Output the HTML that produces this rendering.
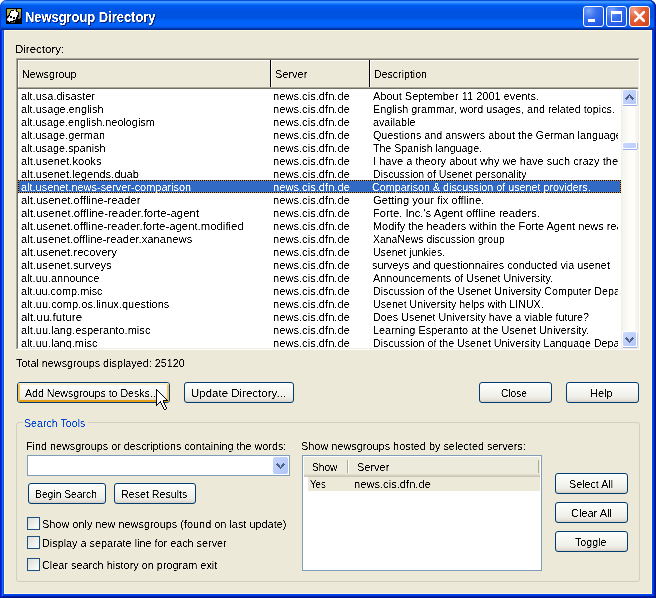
<!DOCTYPE html>
<html><head><meta charset="utf-8"><style>
html,body{margin:0;padding:0;}
body{width:656px;height:598px;overflow:hidden;position:relative;background:#fff;font-family:"Liberation Sans",sans-serif;font-size:11px;line-height:13px;}
.a{position:absolute;}
.t{filter:url(#sh);position:absolute;white-space:nowrap;font-size:11px;line-height:13px;transform-origin:0 0;color:#000;}
.btn{position:absolute;border:1px solid #003C74;border-radius:3px;background:linear-gradient(180deg,#FFFFFF 0%,#F8F8F5 30%,#F0F0EA 70%,#E6E3DA 88%,#D6D0C5 100%);}
.hot{position:absolute;left:0;top:0;right:0;bottom:0;border:2px solid;border-color:#FFF0CF #F8C05A #E5A01A #F8C05A;border-radius:2px;}
</style></head><body>
<svg width="0" height="0" style="position:absolute"><filter id="sh"><feComponentTransfer><feFuncA type="linear" slope="3" intercept="-1.0"/></feComponentTransfer></filter></svg>

<div class="a" style="left:0;top:0;width:656px;height:30px;border-radius:7px 7px 0 0;box-shadow:inset 1px 0 0 #0A3CD4,inset -1px 0 0 #001A9C,inset -2px 0 0 #0036C8;background:linear-gradient(180deg,#0A4ED8 0px,#0A4ED8 0.5px,#3D95FF 1.5px,#3D95FF 2.5px,#1E7BFF 3.5px,#0A6BF5 4.5px,#005CEE 5.5px,#0055E6 8.5px,#0053E0 12px,#0053E0 17.5px,#005AEA 19px,#0062F8 21px,#0062F8 25.5px,#005CF0 26.5px,#0050DC 27.5px,#003BB5 28.5px,#002C96 29.5px);"></div>
<div class="a" style="left:0px;top:30px;width:4px;height:568px;background:linear-gradient(90deg,#0019CF 0px,#0019CF 1px,#0832D9 1px,#0832D9 2px,#166AEE 2px,#166AEE 3px,#0855DD 3px,#0855DD 4px);"></div>
<div class="a" style="left:652px;top:30px;width:4px;height:564px;background:linear-gradient(90deg,#0045F0 0px,#0045F0 1px,#003DDC 1px,#003DDC 2px,#001DA0 2px,#001DA0 3px,#00138C 3px);"></div>
<div class="a" style="left:4px;top:594px;width:648px;height:4px;background:linear-gradient(180deg,#0045F0 0px,#0045F0 1px,#003DDC 1px,#003DDC 2px,#001DA0 2px,#001DA0 3px,#00138C 3px);"></div>
<svg class="a" style="left:0;top:594px" width="4" height="4" shape-rendering="crispEdges"><rect x="0" y="0" width="1" height="1" fill="#0019CF"/><rect x="1" y="0" width="1" height="1" fill="#0832D9"/><rect x="2" y="0" width="1" height="1" fill="#166AEE"/><rect x="3" y="0" width="1" height="1" fill="#0855DD"/><rect x="0" y="1" width="1" height="1" fill="#0019CF"/><rect x="1" y="1" width="1" height="1" fill="#0832D9"/><rect x="2" y="1" width="1" height="1" fill="#166AEE"/><rect x="3" y="1" width="1" height="1" fill="#003DDC"/><rect x="0" y="2" width="1" height="1" fill="#0019CF"/><rect x="1" y="2" width="1" height="1" fill="#0832D9"/><rect x="2" y="2" width="1" height="1" fill="#001DA0"/><rect x="3" y="2" width="1" height="1" fill="#001DA0"/><rect x="0" y="3" width="1" height="1" fill="#0019CF"/><rect x="1" y="3" width="1" height="1" fill="#00138C"/><rect x="2" y="3" width="1" height="1" fill="#00138C"/><rect x="3" y="3" width="1" height="1" fill="#00138C"/></svg>
<svg class="a" style="left:652px;top:594px" width="4" height="4" shape-rendering="crispEdges"><rect x="0" y="0" width="1" height="1" fill="#0045F0"/><rect x="1" y="0" width="1" height="1" fill="#003DDC"/><rect x="2" y="0" width="1" height="1" fill="#001DA0"/><rect x="3" y="0" width="1" height="1" fill="#00138C"/><rect x="0" y="1" width="1" height="1" fill="#003DDC"/><rect x="1" y="1" width="1" height="1" fill="#003DDC"/><rect x="2" y="1" width="1" height="1" fill="#001DA0"/><rect x="3" y="1" width="1" height="1" fill="#00138C"/><rect x="0" y="2" width="1" height="1" fill="#001DA0"/><rect x="1" y="2" width="1" height="1" fill="#001DA0"/><rect x="2" y="2" width="1" height="1" fill="#001DA0"/><rect x="3" y="2" width="1" height="1" fill="#00138C"/><rect x="0" y="3" width="1" height="1" fill="#00138C"/><rect x="1" y="3" width="1" height="1" fill="#00138C"/><rect x="2" y="3" width="1" height="1" fill="#00138C"/><rect x="3" y="3" width="1" height="1" fill="#00138C"/></svg>
<div class="a" style="left:4px;top:30px;width:648px;height:564px;box-sizing:border-box;border:1px solid #FFF7DC;background:#ECE9D8;"></div>
<svg class="a" style="left:6px;top:8px" width="16" height="16" shape-rendering="crispEdges"><rect x="0" y="0" width="1" height="1" fill="#000000"/><rect x="1" y="0" width="1" height="1" fill="#000000"/><rect x="2" y="0" width="1" height="1" fill="#000000"/><rect x="3" y="0" width="1" height="1" fill="#000000"/><rect x="4" y="0" width="1" height="1" fill="#000000"/><rect x="5" y="0" width="1" height="1" fill="#000000"/><rect x="6" y="0" width="1" height="1" fill="#000000"/><rect x="7" y="0" width="1" height="1" fill="#000000"/><rect x="8" y="0" width="1" height="1" fill="#000000"/><rect x="9" y="0" width="1" height="1" fill="#000000"/><rect x="10" y="0" width="1" height="1" fill="#000000"/><rect x="11" y="0" width="1" height="1" fill="#000000"/><rect x="12" y="0" width="1" height="1" fill="#000000"/><rect x="13" y="0" width="1" height="1" fill="#000000"/><rect x="14" y="0" width="1" height="1" fill="#000000"/><rect x="15" y="0" width="1" height="1" fill="#000000"/><rect x="0" y="1" width="1" height="1" fill="#000000"/><rect x="1" y="1" width="1" height="1" fill="#B5B03A"/><rect x="2" y="1" width="1" height="1" fill="#B5B03A"/><rect x="3" y="1" width="1" height="1" fill="#B5B03A"/><rect x="4" y="1" width="1" height="1" fill="#B5B03A"/><rect x="5" y="1" width="1" height="1" fill="#B5B03A"/><rect x="6" y="1" width="1" height="1" fill="#B5B03A"/><rect x="7" y="1" width="1" height="1" fill="#8E8EA6"/><rect x="8" y="1" width="1" height="1" fill="#8E8EA6"/><rect x="9" y="1" width="1" height="1" fill="#8E8EA6"/><rect x="10" y="1" width="1" height="1" fill="#000000"/><rect x="11" y="1" width="1" height="1" fill="#B5B03A"/><rect x="12" y="1" width="1" height="1" fill="#B5B03A"/><rect x="13" y="1" width="1" height="1" fill="#B5B03A"/><rect x="14" y="1" width="1" height="1" fill="#B5B03A"/><rect x="15" y="1" width="1" height="1" fill="#000000"/><rect x="0" y="2" width="1" height="1" fill="#000000"/><rect x="1" y="2" width="1" height="1" fill="#B5B03A"/><rect x="2" y="2" width="1" height="1" fill="#B5B03A"/><rect x="3" y="2" width="1" height="1" fill="#B5B03A"/><rect x="4" y="2" width="1" height="1" fill="#8E8EA6"/><rect x="5" y="2" width="1" height="1" fill="#000000"/><rect x="6" y="2" width="1" height="1" fill="#000000"/><rect x="7" y="2" width="1" height="1" fill="#000000"/><rect x="8" y="2" width="1" height="1" fill="#FFFFFF"/><rect x="9" y="2" width="1" height="1" fill="#B5B03A"/><rect x="10" y="2" width="1" height="1" fill="#000000"/><rect x="11" y="2" width="1" height="1" fill="#B5B03A"/><rect x="12" y="2" width="1" height="1" fill="#B5B03A"/><rect x="13" y="2" width="1" height="1" fill="#B5B03A"/><rect x="14" y="2" width="1" height="1" fill="#B5B03A"/><rect x="15" y="2" width="1" height="1" fill="#000000"/><rect x="0" y="3" width="1" height="1" fill="#000000"/><rect x="1" y="3" width="1" height="1" fill="#B5B03A"/><rect x="2" y="3" width="1" height="1" fill="#B5B03A"/><rect x="3" y="3" width="1" height="1" fill="#B5B03A"/><rect x="4" y="3" width="1" height="1" fill="#000000"/><rect x="5" y="3" width="1" height="1" fill="#FFFFFF"/><rect x="6" y="3" width="1" height="1" fill="#FFFFFF"/><rect x="7" y="3" width="1" height="1" fill="#FFFFFF"/><rect x="8" y="3" width="1" height="1" fill="#FFFFFF"/><rect x="9" y="3" width="1" height="1" fill="#FFFFFF"/><rect x="10" y="3" width="1" height="1" fill="#000000"/><rect x="11" y="3" width="1" height="1" fill="#000000"/><rect x="12" y="3" width="1" height="1" fill="#B5B03A"/><rect x="13" y="3" width="1" height="1" fill="#B5B03A"/><rect x="14" y="3" width="1" height="1" fill="#B5B03A"/><rect x="15" y="3" width="1" height="1" fill="#000000"/><rect x="0" y="4" width="1" height="1" fill="#000000"/><rect x="1" y="4" width="1" height="1" fill="#B5B03A"/><rect x="2" y="4" width="1" height="1" fill="#B5B03A"/><rect x="3" y="4" width="1" height="1" fill="#8E8EA6"/><rect x="4" y="4" width="1" height="1" fill="#000000"/><rect x="5" y="4" width="1" height="1" fill="#FFFFFF"/><rect x="6" y="4" width="1" height="1" fill="#FFFFFF"/><rect x="7" y="4" width="1" height="1" fill="#FFFFFF"/><rect x="8" y="4" width="1" height="1" fill="#FFFFFF"/><rect x="9" y="4" width="1" height="1" fill="#FFFFFF"/><rect x="10" y="4" width="1" height="1" fill="#FFFFFF"/><rect x="11" y="4" width="1" height="1" fill="#FFFFFF"/><rect x="12" y="4" width="1" height="1" fill="#000000"/><rect x="13" y="4" width="1" height="1" fill="#7A7A7A"/><rect x="14" y="4" width="1" height="1" fill="#7A7A7A"/><rect x="15" y="4" width="1" height="1" fill="#000000"/><rect x="0" y="5" width="1" height="1" fill="#000000"/><rect x="1" y="5" width="1" height="1" fill="#B5B03A"/><rect x="2" y="5" width="1" height="1" fill="#B5B03A"/><rect x="3" y="5" width="1" height="1" fill="#000000"/><rect x="4" y="5" width="1" height="1" fill="#FFFFFF"/><rect x="5" y="5" width="1" height="1" fill="#FFFFFF"/><rect x="6" y="5" width="1" height="1" fill="#FFFFFF"/><rect x="7" y="5" width="1" height="1" fill="#FFFFFF"/><rect x="8" y="5" width="1" height="1" fill="#FFFFFF"/><rect x="9" y="5" width="1" height="1" fill="#FFFFFF"/><rect x="10" y="5" width="1" height="1" fill="#FFFFFF"/><rect x="11" y="5" width="1" height="1" fill="#FFFFFF"/><rect x="12" y="5" width="1" height="1" fill="#000000"/><rect x="13" y="5" width="1" height="1" fill="#7A7A7A"/><rect x="14" y="5" width="1" height="1" fill="#7A7A7A"/><rect x="15" y="5" width="1" height="1" fill="#000000"/><rect x="0" y="6" width="1" height="1" fill="#000000"/><rect x="1" y="6" width="1" height="1" fill="#B5B03A"/><rect x="2" y="6" width="1" height="1" fill="#B5B03A"/><rect x="3" y="6" width="1" height="1" fill="#000000"/><rect x="4" y="6" width="1" height="1" fill="#FFFFFF"/><rect x="5" y="6" width="1" height="1" fill="#FFFFFF"/><rect x="6" y="6" width="1" height="1" fill="#FFFFFF"/><rect x="7" y="6" width="1" height="1" fill="#FFFFFF"/><rect x="8" y="6" width="1" height="1" fill="#FFFFFF"/><rect x="9" y="6" width="1" height="1" fill="#FFFFFF"/><rect x="10" y="6" width="1" height="1" fill="#FFFFFF"/><rect x="11" y="6" width="1" height="1" fill="#FFFFFF"/><rect x="12" y="6" width="1" height="1" fill="#000000"/><rect x="13" y="6" width="1" height="1" fill="#7A7A7A"/><rect x="14" y="6" width="1" height="1" fill="#7A7A7A"/><rect x="15" y="6" width="1" height="1" fill="#000000"/><rect x="0" y="7" width="1" height="1" fill="#000000"/><rect x="1" y="7" width="1" height="1" fill="#B5B03A"/><rect x="2" y="7" width="1" height="1" fill="#000000"/><rect x="3" y="7" width="1" height="1" fill="#000000"/><rect x="4" y="7" width="1" height="1" fill="#FFFFFF"/><rect x="5" y="7" width="1" height="1" fill="#FFFFFF"/><rect x="6" y="7" width="1" height="1" fill="#FFFFFF"/><rect x="7" y="7" width="1" height="1" fill="#FFFFFF"/><rect x="8" y="7" width="1" height="1" fill="#FFFFFF"/><rect x="9" y="7" width="1" height="1" fill="#FFFFFF"/><rect x="10" y="7" width="1" height="1" fill="#FFFFFF"/><rect x="11" y="7" width="1" height="1" fill="#000000"/><rect x="12" y="7" width="1" height="1" fill="#000000"/><rect x="13" y="7" width="1" height="1" fill="#7A7A7A"/><rect x="14" y="7" width="1" height="1" fill="#7A7A7A"/><rect x="15" y="7" width="1" height="1" fill="#000000"/><rect x="0" y="8" width="1" height="1" fill="#000000"/><rect x="1" y="8" width="1" height="1" fill="#000000"/><rect x="2" y="8" width="1" height="1" fill="#000000"/><rect x="3" y="8" width="1" height="1" fill="#FFFFFF"/><rect x="4" y="8" width="1" height="1" fill="#000000"/><rect x="5" y="8" width="1" height="1" fill="#000000"/><rect x="6" y="8" width="1" height="1" fill="#FFFFFF"/><rect x="7" y="8" width="1" height="1" fill="#FFFFFF"/><rect x="8" y="8" width="1" height="1" fill="#FFFFFF"/><rect x="9" y="8" width="1" height="1" fill="#FFFFFF"/><rect x="10" y="8" width="1" height="1" fill="#FFFFFF"/><rect x="11" y="8" width="1" height="1" fill="#000000"/><rect x="12" y="8" width="1" height="1" fill="#000000"/><rect x="13" y="8" width="1" height="1" fill="#7A7A7A"/><rect x="14" y="8" width="1" height="1" fill="#7A7A7A"/><rect x="15" y="8" width="1" height="1" fill="#000000"/><rect x="0" y="9" width="1" height="1" fill="#000000"/><rect x="1" y="9" width="1" height="1" fill="#000000"/><rect x="2" y="9" width="1" height="1" fill="#8E8EA6"/><rect x="3" y="9" width="1" height="1" fill="#FFFFFF"/><rect x="4" y="9" width="1" height="1" fill="#000000"/><rect x="5" y="9" width="1" height="1" fill="#000000"/><rect x="6" y="9" width="1" height="1" fill="#FFFFFF"/><rect x="7" y="9" width="1" height="1" fill="#000000"/><rect x="8" y="9" width="1" height="1" fill="#000000"/><rect x="9" y="9" width="1" height="1" fill="#FFFFFF"/><rect x="10" y="9" width="1" height="1" fill="#000000"/><rect x="11" y="9" width="1" height="1" fill="#000000"/><rect x="12" y="9" width="1" height="1" fill="#7A7A7A"/><rect x="13" y="9" width="1" height="1" fill="#7A7A7A"/><rect x="14" y="9" width="1" height="1" fill="#7A7A7A"/><rect x="15" y="9" width="1" height="1" fill="#000000"/><rect x="0" y="10" width="1" height="1" fill="#000000"/><rect x="1" y="10" width="1" height="1" fill="#8E8EA6"/><rect x="2" y="10" width="1" height="1" fill="#FFFFFF"/><rect x="3" y="10" width="1" height="1" fill="#FFFFFF"/><rect x="4" y="10" width="1" height="1" fill="#FFFFFF"/><rect x="5" y="10" width="1" height="1" fill="#FFFFFF"/><rect x="6" y="10" width="1" height="1" fill="#FFFFFF"/><rect x="7" y="10" width="1" height="1" fill="#000000"/><rect x="8" y="10" width="1" height="1" fill="#000000"/><rect x="9" y="10" width="1" height="1" fill="#FFFFFF"/><rect x="10" y="10" width="1" height="1" fill="#000000"/><rect x="11" y="10" width="1" height="1" fill="#000000"/><rect x="12" y="10" width="1" height="1" fill="#7A7A7A"/><rect x="13" y="10" width="1" height="1" fill="#7A7A7A"/><rect x="14" y="10" width="1" height="1" fill="#000000"/><rect x="15" y="10" width="1" height="1" fill="#000000"/><rect x="0" y="11" width="1" height="1" fill="#000000"/><rect x="1" y="11" width="1" height="1" fill="#FFFFFF"/><rect x="2" y="11" width="1" height="1" fill="#FFFFFF"/><rect x="3" y="11" width="1" height="1" fill="#FFFFFF"/><rect x="4" y="11" width="1" height="1" fill="#FFFFFF"/><rect x="5" y="11" width="1" height="1" fill="#FFFFFF"/><rect x="6" y="11" width="1" height="1" fill="#FFFFFF"/><rect x="7" y="11" width="1" height="1" fill="#FFFFFF"/><rect x="8" y="11" width="1" height="1" fill="#FFFFFF"/><rect x="9" y="11" width="1" height="1" fill="#7A7A7A"/><rect x="10" y="11" width="1" height="1" fill="#000000"/><rect x="11" y="11" width="1" height="1" fill="#000000"/><rect x="12" y="11" width="1" height="1" fill="#000000"/><rect x="13" y="11" width="1" height="1" fill="#000000"/><rect x="14" y="11" width="1" height="1" fill="#000000"/><rect x="15" y="11" width="1" height="1" fill="#000000"/><rect x="0" y="12" width="1" height="1" fill="#000000"/><rect x="1" y="12" width="1" height="1" fill="#7A7A7A"/><rect x="2" y="12" width="1" height="1" fill="#FFFFFF"/><rect x="3" y="12" width="1" height="1" fill="#FFFFFF"/><rect x="4" y="12" width="1" height="1" fill="#FFFFFF"/><rect x="5" y="12" width="1" height="1" fill="#FFFFFF"/><rect x="6" y="12" width="1" height="1" fill="#FFFFFF"/><rect x="7" y="12" width="1" height="1" fill="#000000"/><rect x="8" y="12" width="1" height="1" fill="#000000"/><rect x="9" y="12" width="1" height="1" fill="#000000"/><rect x="10" y="12" width="1" height="1" fill="#000000"/><rect x="11" y="12" width="1" height="1" fill="#000000"/><rect x="12" y="12" width="1" height="1" fill="#000000"/><rect x="13" y="12" width="1" height="1" fill="#000000"/><rect x="14" y="12" width="1" height="1" fill="#000000"/><rect x="15" y="12" width="1" height="1" fill="#000000"/><rect x="0" y="13" width="1" height="1" fill="#000000"/><rect x="1" y="13" width="1" height="1" fill="#000000"/><rect x="2" y="13" width="1" height="1" fill="#000000"/><rect x="3" y="13" width="1" height="1" fill="#FFFFFF"/><rect x="4" y="13" width="1" height="1" fill="#000000"/><rect x="5" y="13" width="1" height="1" fill="#000000"/><rect x="6" y="13" width="1" height="1" fill="#000000"/><rect x="7" y="13" width="1" height="1" fill="#000000"/><rect x="8" y="13" width="1" height="1" fill="#7A7A7A"/><rect x="9" y="13" width="1" height="1" fill="#000000"/><rect x="10" y="13" width="1" height="1" fill="#000000"/><rect x="11" y="13" width="1" height="1" fill="#000000"/><rect x="12" y="13" width="1" height="1" fill="#000000"/><rect x="13" y="13" width="1" height="1" fill="#000000"/><rect x="14" y="13" width="1" height="1" fill="#000000"/><rect x="15" y="13" width="1" height="1" fill="#000000"/><rect x="0" y="14" width="1" height="1" fill="#000000"/><rect x="1" y="14" width="1" height="1" fill="#000000"/><rect x="2" y="14" width="1" height="1" fill="#000000"/><rect x="3" y="14" width="1" height="1" fill="#000000"/><rect x="4" y="14" width="1" height="1" fill="#000000"/><rect x="5" y="14" width="1" height="1" fill="#4A4A44"/><rect x="6" y="14" width="1" height="1" fill="#4A4A44"/><rect x="7" y="14" width="1" height="1" fill="#4A4A44"/><rect x="8" y="14" width="1" height="1" fill="#4A4A44"/><rect x="9" y="14" width="1" height="1" fill="#000000"/><rect x="10" y="14" width="1" height="1" fill="#000000"/><rect x="11" y="14" width="1" height="1" fill="#000000"/><rect x="12" y="14" width="1" height="1" fill="#000000"/><rect x="13" y="14" width="1" height="1" fill="#000000"/><rect x="14" y="14" width="1" height="1" fill="#000000"/><rect x="15" y="14" width="1" height="1" fill="#000000"/><rect x="0" y="15" width="1" height="1" fill="#000000"/><rect x="1" y="15" width="1" height="1" fill="#000000"/><rect x="2" y="15" width="1" height="1" fill="#000000"/><rect x="3" y="15" width="1" height="1" fill="#000000"/><rect x="4" y="15" width="1" height="1" fill="#000000"/><rect x="5" y="15" width="1" height="1" fill="#000000"/><rect x="6" y="15" width="1" height="1" fill="#000000"/><rect x="7" y="15" width="1" height="1" fill="#000000"/><rect x="8" y="15" width="1" height="1" fill="#000000"/><rect x="9" y="15" width="1" height="1" fill="#000000"/><rect x="10" y="15" width="1" height="1" fill="#000000"/><rect x="11" y="15" width="1" height="1" fill="#000000"/><rect x="12" y="15" width="1" height="1" fill="#000000"/><rect x="13" y="15" width="1" height="1" fill="#000000"/><rect x="14" y="15" width="1" height="1" fill="#000000"/><rect x="15" y="15" width="1" height="1" fill="#000000"/></svg>
<div class="t" style="left:26.08px;top:10px;transform:scaleX(0.9214);font-size:14px;font-weight:bold;line-height:16px;color:#0A1E7A;">Newsgroup Directory</div>
<div class="t" style="left:25.08px;top:9px;transform:scaleX(0.9214);font-size:14px;font-weight:bold;line-height:16px;color:#FFFFFF;">Newsgroup Directory</div>
<div class="a" style="left:583px;top:6px;width:19px;height:19px;border:1px solid #FFFFFF;border-radius:3px;background:radial-gradient(circle at 25% 20%,#7FA6F8 0%,#3A72F0 35%,#245EEA 70%,#1F4FD6 100%);"></div>
<div class="a" style="left:606px;top:6px;width:19px;height:19px;border:1px solid #FFFFFF;border-radius:3px;background:radial-gradient(circle at 25% 20%,#7FA6F8 0%,#3A72F0 35%,#245EEA 70%,#1F4FD6 100%);"></div>
<div class="a" style="left:629px;top:6px;width:19px;height:19px;border:1px solid #FFFFFF;border-radius:3px;background:radial-gradient(circle at 20% 15%,#F2A48C 0%,#E5663F 35%,#DC4E24 75%,#C8401A 100%);"></div>
<div class="a" style="left:588px;top:19px;width:7px;height:3px;background:#fff;"></div>
<div class="a" style="left:611px;top:11px;width:11px;height:11px;box-sizing:border-box;border:1px solid #fff;border-top-width:3px;"></div>
<svg class="a" style="left:634px;top:11px" width="11" height="11" viewBox="0 0 11 11">
<path d="M1 1 L10 10 M10 1 L1 10" stroke="#fff" stroke-width="2.6" stroke-linecap="square"/>
</svg>
<div class="t" style="left:14.95px;top:43px;transform:scaleX(1.0455);">Directory:</div>
<div class="a" style="left:16px;top:58px;width:624px;height:292px;box-sizing:border-box;border-style:solid;border-width:1px;border-color:#ACA899 #FFFFFF #FFFFFF #ACA899;background:#fff;"></div>
<div class="a" style="left:17px;top:59px;width:622px;height:290px;box-sizing:border-box;border-style:solid;border-width:1px;border-color:#716F64 #F1EFE2 #F1EFE2 #716F64;background:#fff;"></div>
<div class="a" style="left:18px;top:60px;width:620px;height:29px;overflow:hidden;">
<div class="a" style="left:0px;top:0;width:253px;height:29px;box-sizing:border-box;background:#ECE9D8;border-left:1px solid #FFFFFF;border-top:1px solid #FFFFFF;"></div>
<div class="a" style="left:252px;top:0;width:1px;height:27px;background:#000000;"></div>
<div class="a" style="left:253px;top:0;width:99px;height:29px;box-sizing:border-box;background:#ECE9D8;border-left:1px solid #FFFFFF;border-top:1px solid #FFFFFF;"></div>
<div class="a" style="left:351px;top:0;width:1px;height:27px;background:#000000;"></div>
<div class="a" style="left:352px;top:0;width:291px;height:29px;box-sizing:border-box;background:#ECE9D8;border-left:1px solid #FFFFFF;border-top:1px solid #FFFFFF;"></div>
<div class="a" style="left:642px;top:0;width:1px;height:27px;background:#000000;"></div>
<div class="a" style="left:0;top:27px;width:620px;height:1px;background:#ACA899;"></div>
<div class="a" style="left:0;top:28px;width:620px;height:1px;background:#716F64;"></div>
</div>
<div class="t" style="left:22.02px;top:68px;transform:scaleX(0.9811);">Newsgroup</div>
<div class="t" style="left:275.00px;top:68px;transform:scaleX(1.0000);">Server</div>
<div class="t" style="left:374.04px;top:68px;transform:scaleX(0.9623);">Description</div>
<div class="a" style="left:18px;top:89px;width:603px;height:259px;background:#fff;"></div>
<div class="a" style="left:18px;top:180px;width:603px;height:13px;background:#316AC5;"></div>
<div class="a" style="left:18px;top:180px;width:603px;height:1px;background:repeating-linear-gradient(90deg,#000 0 1px,#CE953A 1px 2px);"></div>
<div class="a" style="left:18px;top:192px;width:603px;height:1px;background:repeating-linear-gradient(90deg,#000 0 1px,#CE953A 1px 2px);"></div>
<div class="a" style="left:18px;top:180px;width:1px;height:13px;background:repeating-linear-gradient(180deg,#000 0 1px,#CE953A 1px 2px);"></div>
<div class="a" style="left:620px;top:180px;width:1px;height:13px;background:repeating-linear-gradient(180deg,#000 0 1px,#CE953A 1px 2px);"></div>
<div class="t" style="left:21.00px;top:90px;transform:scaleX(1.0000);">alt.usa.disaster</div>
<div class="t" style="left:272.99px;top:90px;transform:scaleX(1.0135);">news.cis.dfn.de</div>
<div class="t" style="left:21.00px;top:103px;transform:scaleX(1.0000);">alt.usage.english</div>
<div class="t" style="left:272.99px;top:103px;transform:scaleX(1.0135);">news.cis.dfn.de</div>
<div class="t" style="left:21.00px;top:116px;transform:scaleX(0.9851);">alt.usage.english.neologism</div>
<div class="t" style="left:272.99px;top:116px;transform:scaleX(1.0135);">news.cis.dfn.de</div>
<div class="t" style="left:21.00px;top:129px;transform:scaleX(0.9881);">alt.usage.german</div>
<div class="t" style="left:272.99px;top:129px;transform:scaleX(1.0135);">news.cis.dfn.de</div>
<div class="t" style="left:21.00px;top:142px;transform:scaleX(0.9881);">alt.usage.spanish</div>
<div class="t" style="left:272.99px;top:142px;transform:scaleX(1.0135);">news.cis.dfn.de</div>
<div class="t" style="left:21.00px;top:155px;transform:scaleX(1.0128);">alt.usenet.kooks</div>
<div class="t" style="left:272.99px;top:155px;transform:scaleX(1.0135);">news.cis.dfn.de</div>
<div class="t" style="left:21.00px;top:168px;transform:scaleX(1.0086);">alt.usenet.legends.duab</div>
<div class="t" style="left:272.99px;top:168px;transform:scaleX(1.0135);">news.cis.dfn.de</div>
<div class="t" style="left:21.00px;top:181px;transform:scaleX(0.9941);color:#FFFFFF;">alt.usenet.news-server-comparison</div>
<div class="t" style="left:272.99px;top:181px;transform:scaleX(1.0135);color:#FFFFFF;">news.cis.dfn.de</div>
<div class="t" style="left:21.00px;top:194px;transform:scaleX(1.0351);">alt.usenet.offline-reader</div>
<div class="t" style="left:272.99px;top:194px;transform:scaleX(1.0135);">news.cis.dfn.de</div>
<div class="t" style="left:21.00px;top:207px;transform:scaleX(1.0412);">alt.usenet.offline-reader.forte-agent</div>
<div class="t" style="left:272.99px;top:207px;transform:scaleX(1.0135);">news.cis.dfn.de</div>
<div class="t" style="left:21.00px;top:220px;transform:scaleX(1.0327);">alt.usenet.offline-reader.forte-agent.modified</div>
<div class="t" style="left:272.99px;top:220px;transform:scaleX(1.0135);">news.cis.dfn.de</div>
<div class="t" style="left:21.00px;top:233px;transform:scaleX(1.0241);">alt.usenet.offline-reader.xananews</div>
<div class="t" style="left:272.99px;top:233px;transform:scaleX(1.0135);">news.cis.dfn.de</div>
<div class="t" style="left:21.00px;top:246px;transform:scaleX(1.0326);">alt.usenet.recovery</div>
<div class="t" style="left:272.99px;top:246px;transform:scaleX(1.0135);">news.cis.dfn.de</div>
<div class="t" style="left:21.00px;top:259px;transform:scaleX(1.0227);">alt.usenet.surveys</div>
<div class="t" style="left:272.99px;top:259px;transform:scaleX(1.0135);">news.cis.dfn.de</div>
<div class="t" style="left:21.00px;top:272px;transform:scaleX(1.0000);">alt.uu.announce</div>
<div class="t" style="left:272.99px;top:272px;transform:scaleX(1.0135);">news.cis.dfn.de</div>
<div class="t" style="left:21.00px;top:285px;transform:scaleX(0.9877);">alt.uu.comp.misc</div>
<div class="t" style="left:272.99px;top:285px;transform:scaleX(1.0135);">news.cis.dfn.de</div>
<div class="t" style="left:21.00px;top:298px;transform:scaleX(1.0068);">alt.uu.comp.os.linux.questions</div>
<div class="t" style="left:272.99px;top:298px;transform:scaleX(1.0135);">news.cis.dfn.de</div>
<div class="t" style="left:21.00px;top:311px;transform:scaleX(1.0526);">alt.uu.future</div>
<div class="t" style="left:272.99px;top:311px;transform:scaleX(1.0135);">news.cis.dfn.de</div>
<div class="t" style="left:21.00px;top:324px;transform:scaleX(1.0079);">alt.uu.lang.esperanto.misc</div>
<div class="t" style="left:272.99px;top:324px;transform:scaleX(1.0135);">news.cis.dfn.de</div>
<div class="t" style="left:21.00px;top:337px;transform:scaleX(1.0000);">alt.uu.lang.misc</div>
<div class="t" style="left:272.99px;top:337px;transform:scaleX(1.0135);">news.cis.dfn.de</div>
<div class="a" style="left:370px;top:89px;width:248px;height:259px;overflow:hidden;">
<div class="t" style="left:3.00px;top:1px;transform:scaleX(1.0000);">About September 11 2001 events.</div>
<div class="t" style="left:3.02px;top:14px;transform:scaleX(0.9795);">English grammar, word usages, and related topics.</div>
<div class="t" style="left:3.00px;top:27px;transform:scaleX(0.9762);">available</div>
<div class="t" style="left:3.00px;top:40px;transform:scaleX(0.9756);">Questions and answers about the German language</div>
<div class="t" style="left:3.00px;top:53px;transform:scaleX(0.9640);">The Spanish language.</div>
<div class="t" style="left:3.00px;top:66px;transform:scaleX(1.0045);">I have a theory about why we have such crazy theories</div>
<div class="t" style="left:3.04px;top:79px;transform:scaleX(0.9620);">Discussion of Usenet personality</div>
<div class="t" style="left:2.02px;top:92px;transform:scaleX(0.9774);color:#FFFFFF;">Comparison &amp; discussion of usenet providers.</div>
<div class="t" style="left:3.00px;top:105px;transform:scaleX(1.0185);">Getting your fix offline.</div>
<div class="t" style="left:2.98px;top:118px;transform:scaleX(1.0186);">Forte, Inc.&#x27;s Agent offline readers.</div>
<div class="t" style="left:3.00px;top:131px;transform:scaleX(0.9957);">Modify the headers within the Forte Agent news reader</div>
<div class="t" style="left:3.05px;top:144px;transform:scaleX(0.9489);">XanaNews discussion group</div>
<div class="t" style="left:3.04px;top:157px;transform:scaleX(0.9589);">Usenet junkies.</div>
<div class="t" style="left:2.01px;top:170px;transform:scaleX(0.9874);">surveys and questionnaires conducted via usenet</div>
<div class="t" style="left:3.00px;top:183px;transform:scaleX(0.9835);">Announcements of Usenet University.</div>
<div class="t" style="left:3.03px;top:196px;transform:scaleX(0.9730);">Discussion of the Usenet University Computer Department</div>
<div class="t" style="left:3.03px;top:209px;transform:scaleX(0.9655);">Usenet University helps with LINUX.</div>
<div class="t" style="left:3.02px;top:222px;transform:scaleX(0.9817);">Does Usenet University have a viable future?</div>
<div class="t" style="left:3.01px;top:235px;transform:scaleX(0.9907);">Learning Esperanto at the Usenet University.</div>
<div class="t" style="left:3.03px;top:248px;transform:scaleX(0.9686);">Discussion of the Usenet University Language Department</div>
</div>
<div class="a" style="left:18px;top:348px;width:620px;height:1px;background:#F1EFE2;"></div>
<div class="a" style="left:16px;top:349px;width:624px;height:1px;background:#FFFFFF;"></div>
<div class="a" style="left:621px;top:89px;width:17px;height:259px;background:linear-gradient(90deg,#EEEDE5 0px,#F5F4EF 2px,#FDFDFA 8px,#FEFEFB 13px,#F4F3EE 16px);"></div>
<div class="a" style="left:622px;top:89px;width:15px;height:16px;box-sizing:border-box;border:1px solid #FFFFFF;border-radius:2px;background:linear-gradient(135deg,#CCDAFB 0%,#BFD0FA 50%,#B4C8F8 100%);"></div>
<div class="a" style="left:623px;top:105px;width:14px;height:1px;background:#9AB0E6;"></div>
<div class="a" style="left:637px;top:91px;width:1px;height:14px;background:#C8D2EE;"></div>
<svg class="a" style="left:625px;top:94px" width="9" height="6" shape-rendering="crispEdges"><rect x="4" y="0" width="1" height="1" fill="#4D6185"/><rect x="3" y="1" width="1" height="1" fill="#4D6185"/><rect x="4" y="1" width="1" height="1" fill="#4D6185"/><rect x="5" y="1" width="1" height="1" fill="#4D6185"/><rect x="2" y="2" width="1" height="1" fill="#4D6185"/><rect x="3" y="2" width="1" height="1" fill="#4D6185"/><rect x="5" y="2" width="1" height="1" fill="#4D6185"/><rect x="6" y="2" width="1" height="1" fill="#4D6185"/><rect x="1" y="3" width="1" height="1" fill="#4D6185"/><rect x="2" y="3" width="1" height="1" fill="#4D6185"/><rect x="3" y="3" width="1" height="1" fill="#4D6185"/><rect x="5" y="3" width="1" height="1" fill="#4D6185"/><rect x="6" y="3" width="1" height="1" fill="#4D6185"/><rect x="7" y="3" width="1" height="1" fill="#4D6185"/><rect x="0" y="4" width="1" height="1" fill="#4D6185"/><rect x="1" y="4" width="1" height="1" fill="#4D6185"/><rect x="2" y="4" width="1" height="1" fill="#4D6185"/><rect x="6" y="4" width="1" height="1" fill="#4D6185"/><rect x="7" y="4" width="1" height="1" fill="#4D6185"/><rect x="8" y="4" width="1" height="1" fill="#4D6185"/><rect x="1" y="5" width="1" height="1" fill="#4D6185"/><rect x="7" y="5" width="1" height="1" fill="#4D6185"/></svg>
<div class="a" style="left:622px;top:331px;width:15px;height:16px;box-sizing:border-box;border:1px solid #FFFFFF;border-radius:2px;background:linear-gradient(135deg,#CCDAFB 0%,#BFD0FA 50%,#B4C8F8 100%);"></div>
<div class="a" style="left:623px;top:347px;width:14px;height:1px;background:#9AB0E6;"></div>
<div class="a" style="left:637px;top:333px;width:1px;height:14px;background:#C8D2EE;"></div>
<svg class="a" style="left:625px;top:337px" width="9" height="6" shape-rendering="crispEdges"><rect x="1" y="0" width="1" height="1" fill="#4D6185"/><rect x="7" y="0" width="1" height="1" fill="#4D6185"/><rect x="0" y="1" width="1" height="1" fill="#4D6185"/><rect x="1" y="1" width="1" height="1" fill="#4D6185"/><rect x="2" y="1" width="1" height="1" fill="#4D6185"/><rect x="6" y="1" width="1" height="1" fill="#4D6185"/><rect x="7" y="1" width="1" height="1" fill="#4D6185"/><rect x="8" y="1" width="1" height="1" fill="#4D6185"/><rect x="1" y="2" width="1" height="1" fill="#4D6185"/><rect x="2" y="2" width="1" height="1" fill="#4D6185"/><rect x="3" y="2" width="1" height="1" fill="#4D6185"/><rect x="5" y="2" width="1" height="1" fill="#4D6185"/><rect x="6" y="2" width="1" height="1" fill="#4D6185"/><rect x="7" y="2" width="1" height="1" fill="#4D6185"/><rect x="2" y="3" width="1" height="1" fill="#4D6185"/><rect x="3" y="3" width="1" height="1" fill="#4D6185"/><rect x="5" y="3" width="1" height="1" fill="#4D6185"/><rect x="6" y="3" width="1" height="1" fill="#4D6185"/><rect x="3" y="4" width="1" height="1" fill="#4D6185"/><rect x="4" y="4" width="1" height="1" fill="#4D6185"/><rect x="5" y="4" width="1" height="1" fill="#4D6185"/><rect x="4" y="5" width="1" height="1" fill="#4D6185"/></svg>
<div class="a" style="left:622px;top:142px;width:15px;height:7px;box-sizing:border-box;border:1px solid #FFFFFF;border-radius:2px;background:linear-gradient(90deg,#C6D6FC,#BCD0FB);"></div>
<div class="a" style="left:623px;top:149px;width:14px;height:1px;background:#9AB0E6;"></div>
<div class="a" style="left:637px;top:143px;width:1px;height:6px;background:#A8BCEB;"></div>
<div class="t" style="left:16.00px;top:357px;transform:scaleX(0.9825);">Total newsgroups displayed: 25120</div>
<div class="btn" style="left:17px;top:382px;width:151px;height:19px;"><div class="hot"></div></div>
<div class="t" style="left:25.00px;top:387px;transform:scaleX(0.9635);">Add Newsgroups to Desks...</div>
<div class="btn" style="left:184px;top:382px;width:108px;height:19px;"></div>
<div class="t" style="left:190.95px;top:387px;transform:scaleX(1.0455);">Update Directory...</div>
<div class="btn" style="left:479px;top:382px;width:71px;height:19px;"></div>
<div class="t" style="left:501.08px;top:387px;transform:scaleX(0.9231);">Close</div>
<div class="btn" style="left:566px;top:382px;width:71px;height:19px;"></div>
<div class="t" style="left:590.00px;top:387px;transform:scaleX(1.0000);">Help</div>
<div class="a" style="left:16px;top:422px;width:624px;height:160px;box-sizing:border-box;border:1px solid #D0D0BF;border-radius:3px;"></div>
<div class="a" style="left:23px;top:418px;width:65px;height:8px;background:#ECE9D8;"></div>
<div class="t" style="left:24.03px;top:417px;transform:scaleX(0.9672);color:#0046D5;">Search Tools</div>
<div class="t" style="left:26.02px;top:440px;transform:scaleX(0.9810);">Find newsgroups or descriptions containing the words:</div>
<div class="a" style="left:27px;top:455px;width:263px;height:21px;box-sizing:border-box;border:1px solid #7F9DB9;background:#fff;"></div>
<div class="a" style="left:273px;top:457px;width:15px;height:17px;border-radius:2px;background:linear-gradient(135deg,#C6D5FC 0%,#B9CCFA 60%,#AFC6F8 100%);"></div>
<svg class="a" style="left:276px;top:463px" width="9" height="6" shape-rendering="crispEdges"><rect x="1" y="0" width="1" height="1" fill="#4D6185"/><rect x="7" y="0" width="1" height="1" fill="#4D6185"/><rect x="0" y="1" width="1" height="1" fill="#4D6185"/><rect x="1" y="1" width="1" height="1" fill="#4D6185"/><rect x="2" y="1" width="1" height="1" fill="#4D6185"/><rect x="6" y="1" width="1" height="1" fill="#4D6185"/><rect x="7" y="1" width="1" height="1" fill="#4D6185"/><rect x="8" y="1" width="1" height="1" fill="#4D6185"/><rect x="1" y="2" width="1" height="1" fill="#4D6185"/><rect x="2" y="2" width="1" height="1" fill="#4D6185"/><rect x="3" y="2" width="1" height="1" fill="#4D6185"/><rect x="5" y="2" width="1" height="1" fill="#4D6185"/><rect x="6" y="2" width="1" height="1" fill="#4D6185"/><rect x="7" y="2" width="1" height="1" fill="#4D6185"/><rect x="2" y="3" width="1" height="1" fill="#4D6185"/><rect x="3" y="3" width="1" height="1" fill="#4D6185"/><rect x="5" y="3" width="1" height="1" fill="#4D6185"/><rect x="6" y="3" width="1" height="1" fill="#4D6185"/><rect x="3" y="4" width="1" height="1" fill="#4D6185"/><rect x="4" y="4" width="1" height="1" fill="#4D6185"/><rect x="5" y="4" width="1" height="1" fill="#4D6185"/><rect x="4" y="5" width="1" height="1" fill="#4D6185"/></svg>
<div class="btn" style="left:28px;top:483px;width:76px;height:19px;"></div>
<div class="t" style="left:35.06px;top:488px;transform:scaleX(0.9375);">Begin Search</div>
<div class="btn" style="left:114px;top:483px;width:80px;height:19px;"></div>
<div class="t" style="left:121.03px;top:488px;transform:scaleX(0.9697);">Reset Results</div>
<div class="a" style="left:27px;top:517px;width:13px;height:13px;box-sizing:border-box;border:1px solid #1C5180;background:linear-gradient(135deg,#DCDCD7 0%,#ECECE8 45%,#FFFFFF 100%);"></div>
<div class="t" style="left:42.01px;top:518px;transform:scaleX(0.9918);">Show only new newsgroups (found on last update)</div>
<div class="a" style="left:27px;top:536px;width:13px;height:13px;box-sizing:border-box;border:1px solid #1C5180;background:linear-gradient(135deg,#DCDCD7 0%,#ECECE8 45%,#FFFFFF 100%);"></div>
<div class="t" style="left:42.02px;top:537px;transform:scaleX(0.9839);">Display a separate line for each server</div>
<div class="a" style="left:27px;top:558px;width:13px;height:13px;box-sizing:border-box;border:1px solid #1C5180;background:linear-gradient(135deg,#DCDCD7 0%,#ECECE8 45%,#FFFFFF 100%);"></div>
<div class="t" style="left:42.01px;top:559px;transform:scaleX(0.9886);">Clear search history on program exit</div>
<div class="t" style="left:301.01px;top:440px;transform:scaleX(0.9911);">Show newsgroups hosted by selected servers:</div>
<div class="a" style="left:302px;top:455px;width:240px;height:116px;box-sizing:border-box;border:1px solid #7F9DB9;background:#fff;"></div>
<div class="a" style="left:304px;top:457px;width:236px;height:20px;background:linear-gradient(180deg,#EBEADB 0px,#EBEADB 17px,#E2DECD 17px,#E2DECD 18px,#D6D2C2 18px,#D6D2C2 19px,#CBC7B8 19px);"></div>
<div class="a" style="left:347px;top:460px;width:1px;height:13px;background:#ACA899;"></div>
<div class="a" style="left:348px;top:460px;width:1px;height:13px;background:#FFFFFF;"></div>
<div class="a" style="left:538px;top:460px;width:1px;height:13px;background:#ACA899;"></div>
<div class="t" style="left:312.08px;top:461px;transform:scaleX(0.9231);">Show</div>
<div class="t" style="left:357.00px;top:461px;transform:scaleX(1.0000);">Server</div>
<div class="a" style="left:308px;top:477px;width:232px;height:14px;background:#ECE9D8;"></div>
<div class="t" style="left:310.00px;top:478px;transform:scaleX(0.8824);">Yes</div>
<div class="t" style="left:353.99px;top:478px;transform:scaleX(1.0135);">news.cis.dfn.de</div>
<div class="btn" style="left:555px;top:473px;width:71px;height:19px;"></div>
<div class="t" style="left:569.02px;top:478px;transform:scaleX(0.9767);">Select All</div>
<div class="btn" style="left:555px;top:502px;width:71px;height:19px;"></div>
<div class="t" style="left:571.00px;top:507px;transform:scaleX(1.0000);">Clear All</div>
<div class="btn" style="left:555px;top:531px;width:71px;height:19px;"></div>
<div class="t" style="left:575.00px;top:536px;transform:scaleX(0.9677);">Toggle</div>
<svg class="a" style="left:156px;top:389px" width="12" height="21" shape-rendering="crispEdges"><rect x="0" y="0" width="1" height="1" fill="#000"/><rect x="0" y="1" width="1" height="1" fill="#000"/><rect x="1" y="1" width="1" height="1" fill="#000"/><rect x="0" y="2" width="1" height="1" fill="#000"/><rect x="1" y="2" width="1" height="1" fill="#fff"/><rect x="2" y="2" width="1" height="1" fill="#000"/><rect x="0" y="3" width="1" height="1" fill="#000"/><rect x="1" y="3" width="1" height="1" fill="#fff"/><rect x="2" y="3" width="1" height="1" fill="#fff"/><rect x="3" y="3" width="1" height="1" fill="#000"/><rect x="0" y="4" width="1" height="1" fill="#000"/><rect x="1" y="4" width="1" height="1" fill="#fff"/><rect x="2" y="4" width="1" height="1" fill="#fff"/><rect x="3" y="4" width="1" height="1" fill="#fff"/><rect x="4" y="4" width="1" height="1" fill="#000"/><rect x="0" y="5" width="1" height="1" fill="#000"/><rect x="1" y="5" width="1" height="1" fill="#fff"/><rect x="2" y="5" width="1" height="1" fill="#fff"/><rect x="3" y="5" width="1" height="1" fill="#fff"/><rect x="4" y="5" width="1" height="1" fill="#fff"/><rect x="5" y="5" width="1" height="1" fill="#000"/><rect x="0" y="6" width="1" height="1" fill="#000"/><rect x="1" y="6" width="1" height="1" fill="#fff"/><rect x="2" y="6" width="1" height="1" fill="#fff"/><rect x="3" y="6" width="1" height="1" fill="#fff"/><rect x="4" y="6" width="1" height="1" fill="#fff"/><rect x="5" y="6" width="1" height="1" fill="#fff"/><rect x="6" y="6" width="1" height="1" fill="#000"/><rect x="0" y="7" width="1" height="1" fill="#000"/><rect x="1" y="7" width="1" height="1" fill="#fff"/><rect x="2" y="7" width="1" height="1" fill="#fff"/><rect x="3" y="7" width="1" height="1" fill="#fff"/><rect x="4" y="7" width="1" height="1" fill="#fff"/><rect x="5" y="7" width="1" height="1" fill="#fff"/><rect x="6" y="7" width="1" height="1" fill="#fff"/><rect x="7" y="7" width="1" height="1" fill="#000"/><rect x="0" y="8" width="1" height="1" fill="#000"/><rect x="1" y="8" width="1" height="1" fill="#fff"/><rect x="2" y="8" width="1" height="1" fill="#fff"/><rect x="3" y="8" width="1" height="1" fill="#fff"/><rect x="4" y="8" width="1" height="1" fill="#fff"/><rect x="5" y="8" width="1" height="1" fill="#fff"/><rect x="6" y="8" width="1" height="1" fill="#fff"/><rect x="7" y="8" width="1" height="1" fill="#fff"/><rect x="8" y="8" width="1" height="1" fill="#000"/><rect x="0" y="9" width="1" height="1" fill="#000"/><rect x="1" y="9" width="1" height="1" fill="#fff"/><rect x="2" y="9" width="1" height="1" fill="#fff"/><rect x="3" y="9" width="1" height="1" fill="#fff"/><rect x="4" y="9" width="1" height="1" fill="#fff"/><rect x="5" y="9" width="1" height="1" fill="#fff"/><rect x="6" y="9" width="1" height="1" fill="#fff"/><rect x="7" y="9" width="1" height="1" fill="#fff"/><rect x="8" y="9" width="1" height="1" fill="#fff"/><rect x="9" y="9" width="1" height="1" fill="#000"/><rect x="0" y="10" width="1" height="1" fill="#000"/><rect x="1" y="10" width="1" height="1" fill="#fff"/><rect x="2" y="10" width="1" height="1" fill="#fff"/><rect x="3" y="10" width="1" height="1" fill="#fff"/><rect x="4" y="10" width="1" height="1" fill="#fff"/><rect x="5" y="10" width="1" height="1" fill="#fff"/><rect x="6" y="10" width="1" height="1" fill="#fff"/><rect x="7" y="10" width="1" height="1" fill="#fff"/><rect x="8" y="10" width="1" height="1" fill="#fff"/><rect x="9" y="10" width="1" height="1" fill="#fff"/><rect x="10" y="10" width="1" height="1" fill="#000"/><rect x="0" y="11" width="1" height="1" fill="#000"/><rect x="1" y="11" width="1" height="1" fill="#fff"/><rect x="2" y="11" width="1" height="1" fill="#fff"/><rect x="3" y="11" width="1" height="1" fill="#fff"/><rect x="4" y="11" width="1" height="1" fill="#fff"/><rect x="5" y="11" width="1" height="1" fill="#fff"/><rect x="6" y="11" width="1" height="1" fill="#fff"/><rect x="7" y="11" width="1" height="1" fill="#000"/><rect x="8" y="11" width="1" height="1" fill="#000"/><rect x="9" y="11" width="1" height="1" fill="#000"/><rect x="10" y="11" width="1" height="1" fill="#000"/><rect x="11" y="11" width="1" height="1" fill="#000"/><rect x="0" y="12" width="1" height="1" fill="#000"/><rect x="1" y="12" width="1" height="1" fill="#fff"/><rect x="2" y="12" width="1" height="1" fill="#fff"/><rect x="3" y="12" width="1" height="1" fill="#fff"/><rect x="4" y="12" width="1" height="1" fill="#000"/><rect x="5" y="12" width="1" height="1" fill="#fff"/><rect x="6" y="12" width="1" height="1" fill="#fff"/><rect x="7" y="12" width="1" height="1" fill="#000"/><rect x="0" y="13" width="1" height="1" fill="#000"/><rect x="1" y="13" width="1" height="1" fill="#fff"/><rect x="2" y="13" width="1" height="1" fill="#fff"/><rect x="3" y="13" width="1" height="1" fill="#000"/><rect x="4" y="13" width="1" height="1" fill="#000"/><rect x="5" y="13" width="1" height="1" fill="#fff"/><rect x="6" y="13" width="1" height="1" fill="#fff"/><rect x="7" y="13" width="1" height="1" fill="#000"/><rect x="0" y="14" width="1" height="1" fill="#000"/><rect x="1" y="14" width="1" height="1" fill="#fff"/><rect x="2" y="14" width="1" height="1" fill="#000"/><rect x="5" y="14" width="1" height="1" fill="#000"/><rect x="6" y="14" width="1" height="1" fill="#fff"/><rect x="7" y="14" width="1" height="1" fill="#fff"/><rect x="8" y="14" width="1" height="1" fill="#000"/><rect x="0" y="15" width="1" height="1" fill="#000"/><rect x="1" y="15" width="1" height="1" fill="#000"/><rect x="5" y="15" width="1" height="1" fill="#000"/><rect x="6" y="15" width="1" height="1" fill="#fff"/><rect x="7" y="15" width="1" height="1" fill="#fff"/><rect x="8" y="15" width="1" height="1" fill="#000"/><rect x="0" y="16" width="1" height="1" fill="#000"/><rect x="6" y="16" width="1" height="1" fill="#000"/><rect x="7" y="16" width="1" height="1" fill="#fff"/><rect x="8" y="16" width="1" height="1" fill="#fff"/><rect x="9" y="16" width="1" height="1" fill="#000"/><rect x="6" y="17" width="1" height="1" fill="#000"/><rect x="7" y="17" width="1" height="1" fill="#fff"/><rect x="8" y="17" width="1" height="1" fill="#fff"/><rect x="9" y="17" width="1" height="1" fill="#000"/><rect x="7" y="18" width="1" height="1" fill="#000"/><rect x="8" y="18" width="1" height="1" fill="#fff"/><rect x="9" y="18" width="1" height="1" fill="#fff"/><rect x="10" y="18" width="1" height="1" fill="#000"/><rect x="7" y="19" width="1" height="1" fill="#000"/><rect x="8" y="19" width="1" height="1" fill="#fff"/><rect x="9" y="19" width="1" height="1" fill="#fff"/><rect x="10" y="19" width="1" height="1" fill="#000"/><rect x="8" y="20" width="1" height="1" fill="#000"/><rect x="9" y="20" width="1" height="1" fill="#000"/></svg>
</body></html>
